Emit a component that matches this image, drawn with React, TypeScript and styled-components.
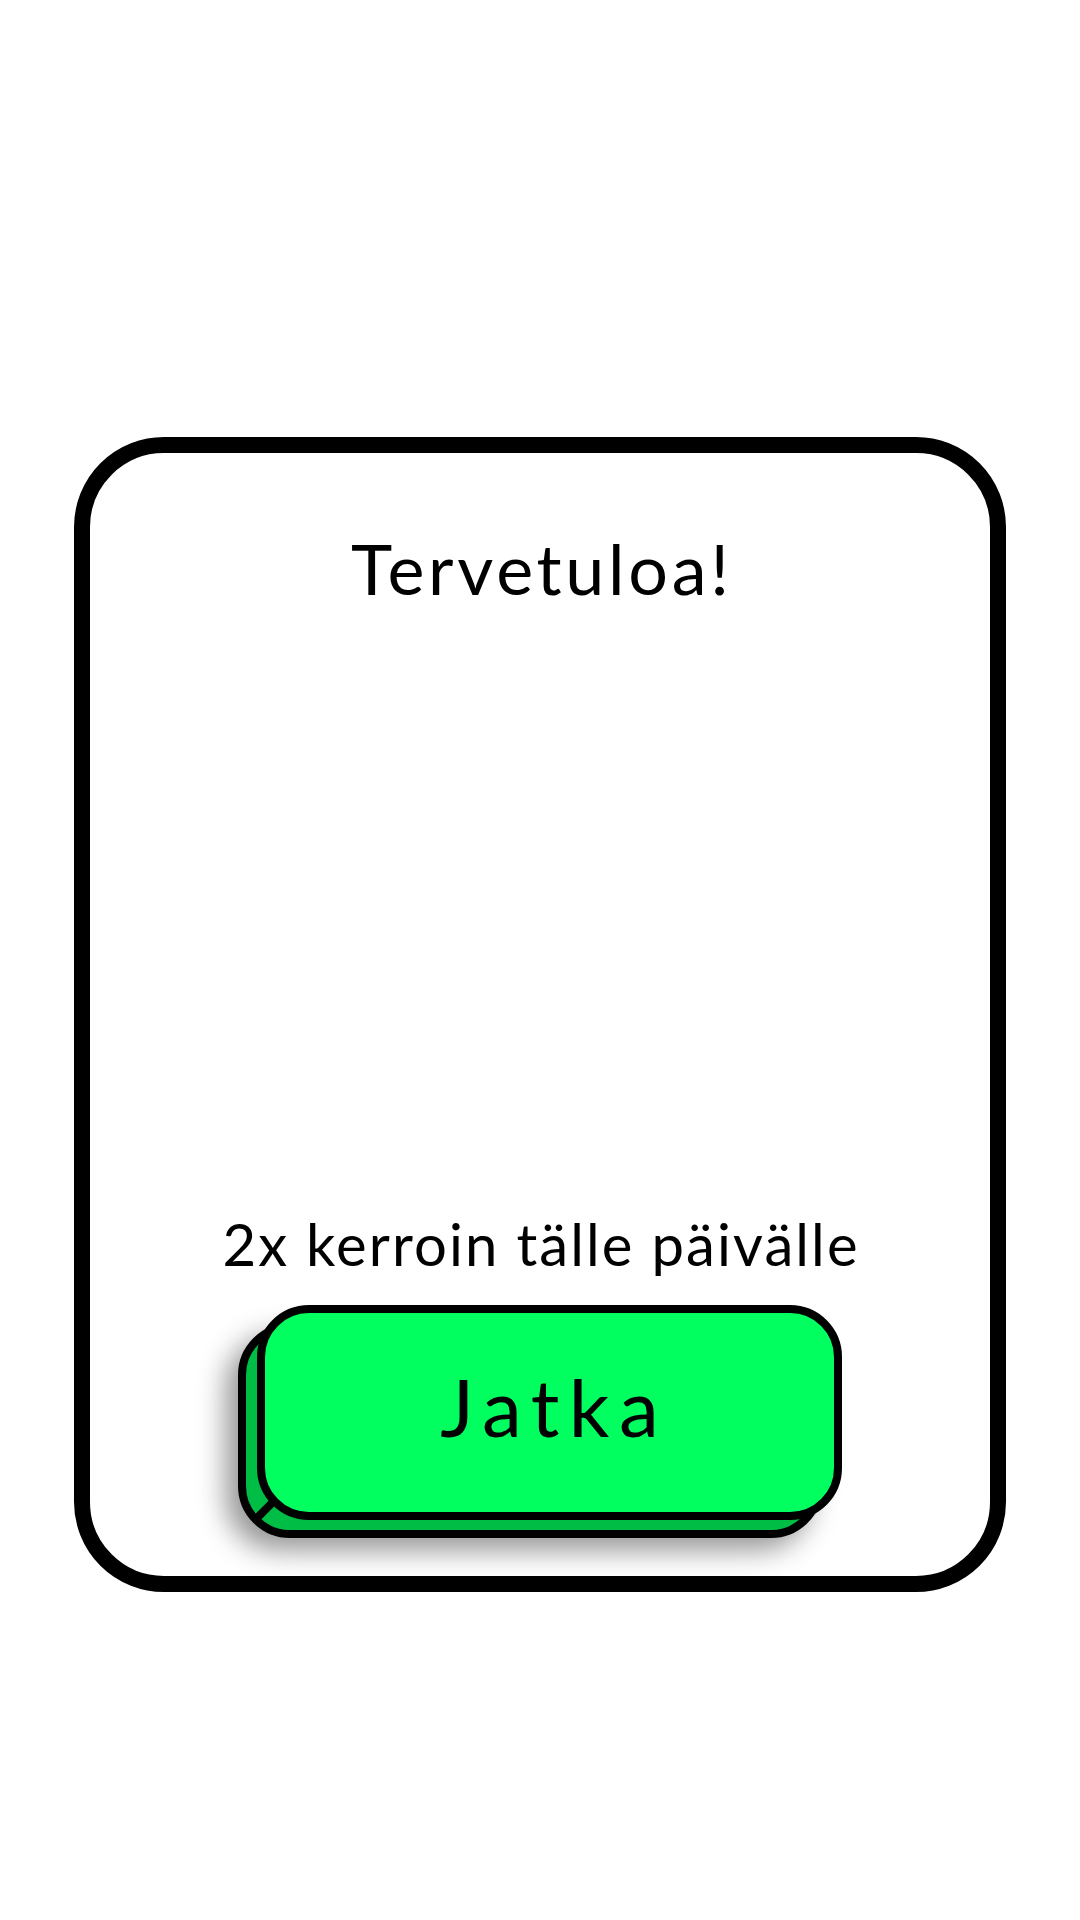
import styled, { createGlobalStyle } from "styled-components";

const GlobalStyle = createGlobalStyle`
  html, body {
    margin: 0;
    padding: 0;
    background: #ffffff;
  }
  body {
    font-family: "Lato", "Noto Sans", sans-serif;
    color: #000000;
  }
`;

function App() {
  return (
    <Page>
      <GlobalStyle />
      <Card>
        <Title>Tervetuloa!</Title>
        <Spacer />
        <Bonus>2x kerroin tälle päivälle</Bonus>
        <ButtonWrap>
          <ButtonBack />
          <ButtonFace type="button">Jatka</ButtonFace>
        </ButtonWrap>
      </Card>
    </Page>
  );
}

const Page = styled.div`
  width: 1080px;
  height: 1920px;
  box-sizing: border-box;
  padding: 437px 74px 0;
`;

const Card = styled.div`
  box-sizing: border-box;
  height: 1155px;
  border: 16px solid #000000;
  border-radius: 90px;
  display: flex;
  flex-direction: column;
  align-items: center;
  padding: 80px 0 38px;
`;

const Title = styled.h1`
  margin: 0;
  font-size: 70px;
  font-weight: 400;
  line-height: 1;
  letter-spacing: 3.7px;
  text-indent: 3.7px;
`;

const Spacer = styled.div`
  flex: 1;
`;

const Bonus = styled.p`
  margin: 0 0 32px;
  font-size: 58px;
  font-weight: 400;
  line-height: 1;
  letter-spacing: 2.1px;
  text-indent: 2.1px;
`;

const ButtonWrap = styled.div`
  position: relative;
  padding: 0 0 18px 19px;
`;

const ButtonBack = styled.div`
  position: absolute;
  left: 0;
  bottom: 0;
  width: 585px;
  height: 215px;
  box-sizing: border-box;
  border: 8px solid #000000;
  border-radius: 52px;
  background: #00bd45;
  box-shadow: -12px 12px 28px rgba(0, 0, 0, 0.42);
`;

const ButtonFace = styled.button`
  position: relative;
  display: flex;
  align-items: center;
  justify-content: center;
  width: 585px;
  height: 215px;
  box-sizing: border-box;
  border: 8px solid #000000;
  border-radius: 52px;
  background: #00ff5f;
  font-family: "Lato", "Noto Sans", sans-serif;
  font-size: 80px;
  font-weight: 400;
  letter-spacing: 9.5px;
  text-indent: 9.5px;
  color: #000000;
  padding: 0 0 14px;
  cursor: pointer;

  &::after {
    content: "";
    position: absolute;
    left: -19px;
    bottom: 6px;
    width: 27px;
    height: 8px;
    background: #000000;
    transform: rotate(-45deg);
    transform-origin: right center;
  }
`;

export default App;
